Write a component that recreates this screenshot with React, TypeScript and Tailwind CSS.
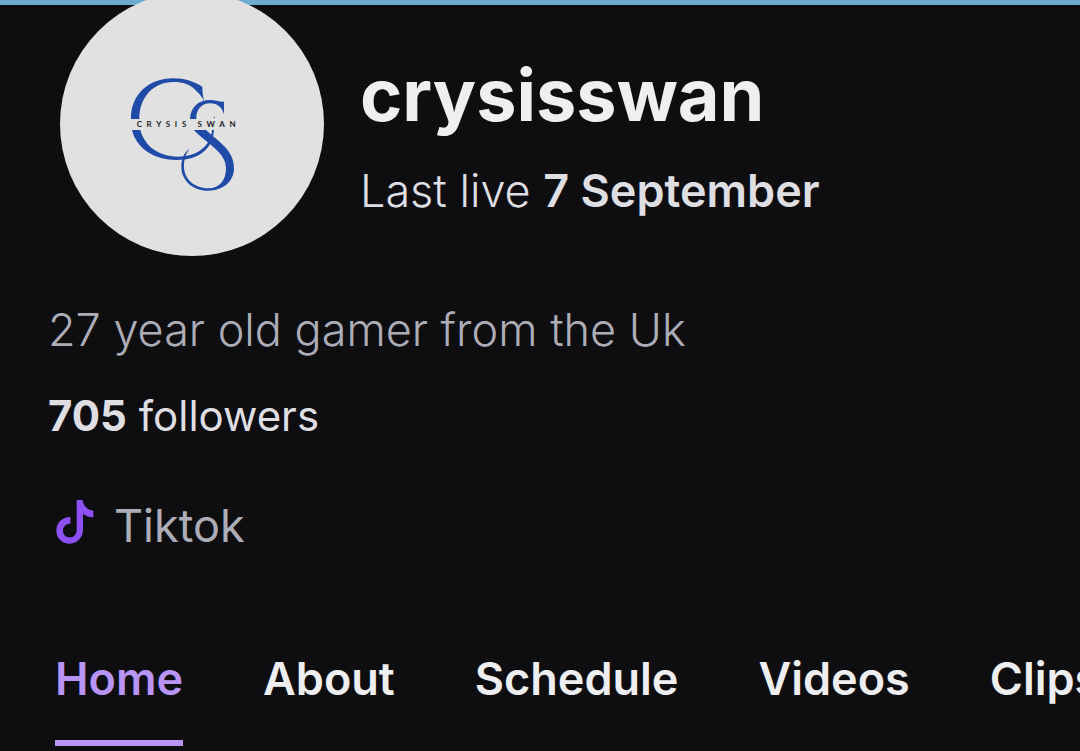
import clsx from "clsx";
import { useState } from "react";

const tabs = ["Home", "About", "Schedule", "Videos", "Clips"];

const Monogram: React.FC = () => {
  return (
    <svg viewBox="0 0 792 792" className="size-full" role="img" aria-label="Crysis Swan">
      <g transform="translate(150 204)" fill="#1f4aa8">
        <path d="M63 177C62 105 115 55 190 55C225 55 252 65 277 80C277 95 279 112 283 125C276 108 262 95 250 84C235 71 212 66 190 66C130 66 88 112 88 177Z" />
        <path d="M66 210H91C104 258 145 289 203 290C262 290 302 258 306 210H312C308 266 268 300 200 300C133 300 80 266 66 210Z" />
        <path d="M240 177C241 144 263 120 300 120C315 120 328 126 342 125V164C338 144 323 130 300 130C275 130 258 148 259 177Z" />
        <path d="M251 210H288C327 247 372 269 372 325C372 365 339 392 295 392C248 392 214 361 214 320C214 294 224 277 238 267C227 282 221 300 222 322C223 359 254 385 295 385C329 385 348 361 348 325C348 278 298 256 251 210Z" />
      </g>
      <circle cx="463" cy="376" r="2" fill="#222226" />
      <text
        x="230"
        y="404"
        fill="#222226"
        className="font-['Lato',sans-serif] text-[24px] font-bold tracking-[14px]"
      >
        CRYSIS SWAN
      </text>
    </svg>
  );
};

const TiktokIcon: React.FC = () => {
  return (
    <svg viewBox="0 0 112 156" className="h-[52px] w-[38px]" fill="#8d50f5" aria-hidden="true">
      <path d="M61 0H79C81 18 93 30 111 32V52C99 52 89 48 80 42V88C80 113 63 131 40 131C17 131 0 114 0 92C0 68 18 51 42 51V71C29 71 20 79 20 92C20 104 28 112 40 112C53 112 61 103 61 89Z" />
    </svg>
  );
};

const App: React.FC = () => {
  const [active, setActive] = useState("Home");

  return (
    <div className="flex min-h-screen flex-col overflow-hidden bg-[#0e0e10] font-['Inter',sans-serif] text-[#efeff1]">
      <div className="h-[5px] bg-[#6cabd0]" />

      <header className="-mt-[13px] flex gap-9 pl-[60px]">
        <div className="size-[264px] shrink-0 overflow-hidden rounded-full bg-[#e1e1e1]">
          <Monogram />
        </div>
        <div className="flex flex-col pt-[55px]">
          <h1 className="text-[72px] leading-[96px] font-bold">crysisswan</h1>
          <p className="mt-5 text-[45px] leading-14 font-light text-[#dedee3]">
            Last live <span className="font-semibold">7 September</span>
          </p>
        </div>
      </header>

      <main className="flex flex-col px-12 pt-[46px]">
        <p className="text-[45px] leading-14 font-light text-[#adadb8]">27 year old gamer from the Uk</p>
        <p className="mt-[30px] text-[42px] leading-14 text-[#dedee3]">
          <span className="font-bold">705</span> followers
        </p>
        <a href="#tiktok" className="mt-[54px] flex items-center gap-5 pl-2 text-[45px] leading-14 text-[#adadb8]">
          <TiktokIcon />
          Tiktok
        </a>
      </main>

      <nav className="mt-[97px] flex gap-20 pl-[55px]">
        {tabs.map((tab) => (
          <button
            key={tab}
            type="button"
            onClick={() => setActive(tab)}
            className={clsx(
              "shrink-0 border-b-[6px] pb-[33px] text-[45px] leading-14 font-semibold",
              active === tab ? "border-[#b794f6] text-[#b794f6]" : "border-transparent"
            )}
          >
            {tab}
          </button>
        ))}
      </nav>
    </div>
  );
};

export default App;
